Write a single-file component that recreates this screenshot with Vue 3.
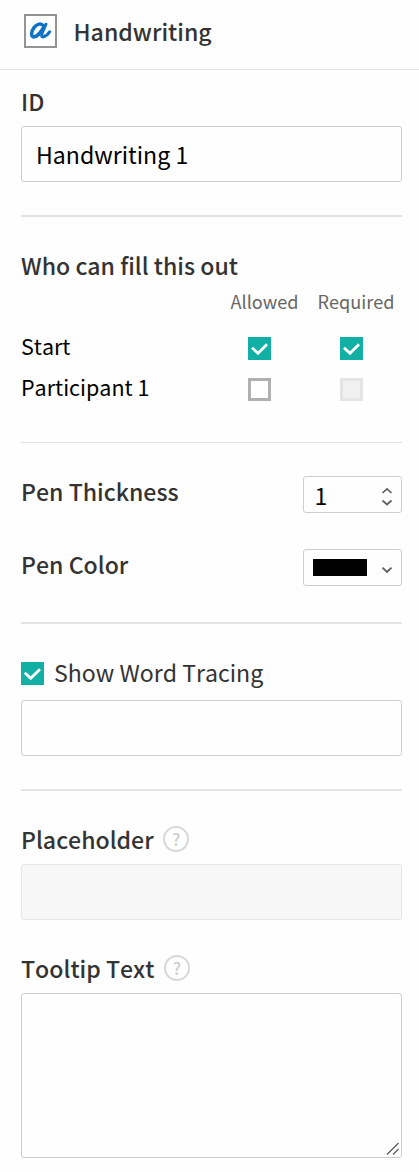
<script setup>
import { ref } from 'vue'

const participants = ref([
  { name: 'Start', allowed: 'on', required: 'on' },
  { name: 'Participant 1', allowed: 'off', required: 'disabled' },
])
const fieldId = ref('Handwriting 1')
const thickness = ref(1)
</script>

<template>
  <main class="panel">
    <header class="head">
      <svg class="logo" width="33" height="34" viewBox="0 0 33 34">
        <rect x="1" y="1" width="31" height="32" fill="#fff" stroke="#949494" stroke-width="2" />
        <g fill="none" stroke="#0f73c5" stroke-linecap="round" stroke-linejoin="round">
          <path d="M19 11.5C17.4 8.6 12.8 10 10 13.6C6.8 17.8 6.8 22.9 9.8 22.9C13.2 22.9 17.6 17.4 20.2 12.2" stroke-width="3.5" />
          <path d="M22 10.2L18.6 18C17 21.6 17.4 23.3 19.4 22.8C21.9 22.2 24.2 20.2 25.7 17.8" stroke-width="3" />
        </g>
      </svg>
      <span class="title">Handwriting</span>
    </header>

    <div class="body">
      <section class="sec-id">
        <div class="label"><span>ID</span></div>
        <div class="box field"><span class="value">{{ fieldId }}</span></div>
      </section>

      <section class="sec-who">
        <div class="label"><span>Who can fill this out</span></div>
        <div class="grid cols"><i></i><span>Allowed</span><span>Required</span></div>
        <div v-for="p in participants" :key="p.name" class="grid row">
          <span class="name">{{ p.name }}</span>
          <span v-for="(state, k) in [p.allowed, p.required]" :key="k" class="check" :class="state">
            <svg v-if="state === 'on'" width="23" height="23" viewBox="0 0 23 23"><path d="M4 10.8L10 16.3L19 7.2" fill="none" stroke="#fff" stroke-width="2.8" /></svg>
          </span>
        </div>
      </section>

      <section class="sec-pen">
        <div class="line">
          <div class="label"><span>Pen Thickness</span></div>
          <div class="box small">
            <span class="value">{{ thickness }}</span>
            <svg class="arrows" width="12" height="20" viewBox="0 0 12 20"><path d="M1.5 6L6 1.8L10.5 6M1.5 13.5L6 17.5L10.5 13.5" fill="none" stroke="#606060" stroke-width="1.7" /></svg>
          </div>
        </div>
        <div class="line">
          <div class="label"><span>Pen Color</span></div>
          <div class="box small">
            <span class="swatch"></span>
            <svg class="arrow" width="12" height="8" viewBox="0 0 12 8"><path d="M1.5 1.6L6 6L10.5 1.6" fill="none" stroke="#606060" stroke-width="1.9" /></svg>
          </div>
        </div>
      </section>

      <section class="sec-trace">
        <div class="toggle">
          <span class="check on"><svg width="23" height="23" viewBox="0 0 23 23"><path d="M3.7 10.8L9.7 16.3L19 7.2" fill="none" stroke="#fff" stroke-width="2.8" /></svg></span>
          <span class="trace">Show Word Tracing</span>
        </div>
        <div class="box field"></div>
      </section>

      <section class="sec-text">
        <div class="label help-label"><span>Placeholder</span><span class="help">?</span></div>
        <div class="box field muted"></div>
        <div class="label help-label second"><span>Tooltip Text</span><span class="help">?</span></div>
        <div class="box area">
          <svg width="14" height="14" viewBox="0 0 14 14"><path d="M1 12.5L12.5 1M7 12.5L12.5 7" fill="none" stroke="#555" stroke-width="1.1" /></svg>
        </div>
      </section>
    </div>
  </main>
</template>

<style>
body { background: #fefefe; }
</style>

<style scoped>
.panel, .panel * { box-sizing: border-box; }
.panel { width: 419px; height: 1172px; overflow: hidden; background: #fefefe; color: #333; font-family: "Noto Sans CJK SC", "Noto Sans", sans-serif; font-size: 23.1px; line-height: 30px; white-space: nowrap; font-kerning: none; }
.head { height: 70px; border-bottom: 1px solid #e3e3e3; display: flex; padding: 14px 0 0 24px; }
.logo { flex: none; }
.title { margin: 2px 0 0 16.5px; font-weight: 500; }
.body { padding: 0 17px 0 21px; }
.label { font-weight: 500; height: 30px; }
.box { border: 1px solid #cecece; border-radius: 3px; background: #fefefe; }
.field { height: 56px; padding: 12px 14px; }
.value { color: #000; display: block; }
.sec-id { height: 147px; padding-top: 16px; border-bottom: 2px solid #e3e3e3; }
.sec-id .label { height: 40px; }
.sec-who { height: 226px; padding-top: 33px; border-bottom: 1px solid #e3e3e3; }
.grid { display: grid; grid-template-columns: 227px 92px 1fr; }
.cols { height: 39px; margin-left: -17.5px; font-size: 18.1px; color: #666; grid-template-columns: 227px 87px 1fr; padding-top: 6px; line-height: 30px; }
.row { height: 41px; padding-top: 18px; }
.name { color: #000; font-size: 21.5px; line-height: 30px; margin-top: -6px; }
.check { display: block; width: 23px; height: 23px; }
.check svg { display: block; }
.on { background: #12b0a4; }
.off { border: 3px solid #b0b0b0; background: #fff; }
.disabled { border: 3px solid #e4e4e4; background: #f0f0f0; }
.sec-pen { height: 181px; padding-top: 33px; border-bottom: 2px solid #e3e3e3; }
.line { display: flex; justify-content: space-between; height: 73px; }
.small { width: 99px; height: 37px; padding: 0 9px; display: flex; align-items: center; justify-content: space-between; }
.small .value { margin: 0 0 0 1.5px; }
.swatch { width: 54px; height: 17px; background: #000; }
.arrows { margin: 4px -1px 0 0; }
.arrow { margin: 4px -1px 0 0; }
.sec-trace { height: 167px; padding-top: 34px; border-bottom: 2px solid #e3e3e3; }
.toggle { height: 42px; display: flex; padding-top: 4px; }
.trace { margin: -5px 0 0 10px; }
.sec-text { padding-top: 33px; }
.help-label { height: 40px; display: flex; }
.help { width: 26px; height: 26px; margin: 2px 0 0 9.5px; border: 2px solid #d8d8d8; border-radius: 50%; color: #ccc; font-size: 17px; line-height: 22px; text-align: center; }
.muted { background: #f7f7f7; border-color: #e6e6e6; }
.second { margin-top: 33px; }
.area { height: 165px; display: flex; align-items: flex-end; justify-content: flex-end; padding: 1px; }
</style>
